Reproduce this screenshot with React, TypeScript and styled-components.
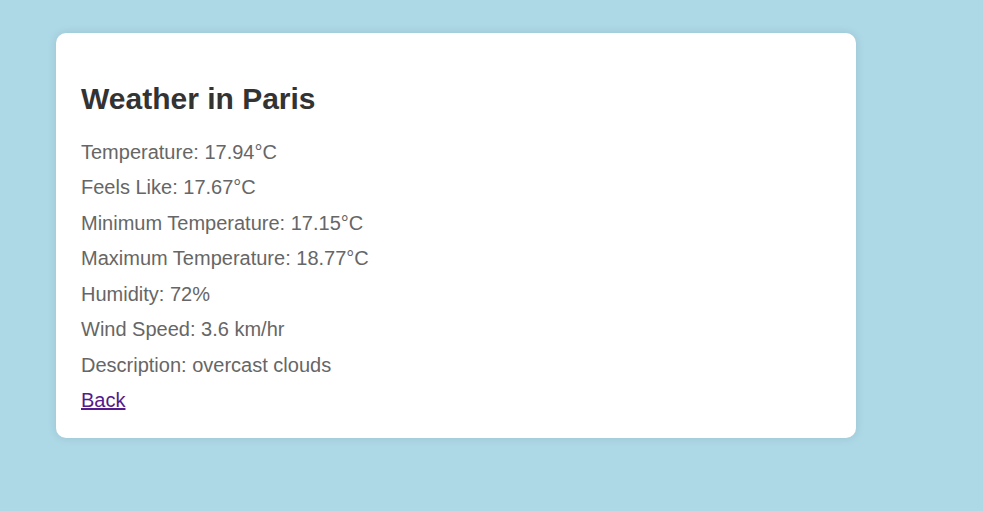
import styled, { createGlobalStyle } from "styled-components";

type WeatherRow = {
  label: string;
  value: string;
};

const rows: WeatherRow[] = [
  { label: "Temperature", value: "17.94°C" },
  { label: "Feels Like", value: "17.67°C" },
  { label: "Minimum Temperature", value: "17.15°C" },
  { label: "Maximum Temperature", value: "18.77°C" },
  { label: "Humidity", value: "72%" },
  { label: "Wind Speed", value: "3.6 km/hr" },
  { label: "Description", value: "overcast clouds" },
];

export default function App() {
  return (
    <>
      <GlobalStyle />
      <SPage>
        <SCard>
          <STitle>Weather in Paris</STitle>
          <SDetails>
            {rows.map((row) => (
              <SRow key={row.label}>
                {row.label}: {row.value}
              </SRow>
            ))}
            <SBack href="#">Back</SBack>
          </SDetails>
        </SCard>
      </SPage>
    </>
  );
}

const GlobalStyle = createGlobalStyle`
  html, body {
    margin: 0;
    padding: 0;
    background-color: #add8e6;
    font-family: "Liberation Sans", Arial, sans-serif;
  }
`;

const SPage = styled.main`
  box-sizing: border-box;
  min-height: 511px;
  padding: 33px 56px;
`;

const SCard = styled.section`
  box-sizing: border-box;
  width: 800px;
  padding: 25px 25px 26px;
  background-color: #ffffff;
  border-radius: 10px;
  box-shadow: 0 0 10px rgba(0, 0, 0, 0.1);
`;

const STitle = styled.h1`
  margin: 24px 0 25px;
  font-size: 30px;
  font-weight: 700;
  color: #333333;
`;

const SDetails = styled.div`
  display: flex;
  flex-direction: column;
  align-items: flex-start;
  gap: 12.45px;
  font-size: 20px;
  line-height: 23px;
`;

const SRow = styled.p`
  margin: 0;
  color: #666666;
`;

const SBack = styled.a`
  color: #551a8b;
  text-decoration: underline;
`;
